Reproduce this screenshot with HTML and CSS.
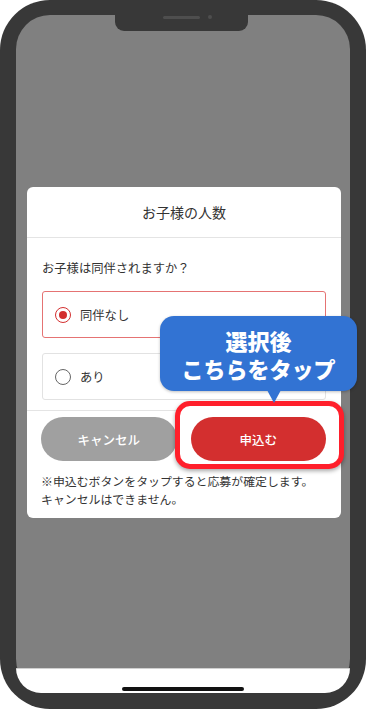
FILE: index.html
```html
<!DOCTYPE html>
<html lang="ja">
<head>
<meta charset="utf-8">
<link rel="stylesheet" href="styles.css">
</head>
<body>
<div class="phone">
  <div class="screen">
    <div class="notch"><span class="speaker"></span><span class="camera"></span></div>
    <div class="overlay">
      <div class="modal">
        <div class="modal-head">お子様の人数</div>
        <div class="modal-body">
          <p class="question">お子様は同伴されますか？</p>
          <div class="option selected"><span class="radio on"></span><span>同伴なし</span></div>
          <div class="option"><span class="radio"></span><span>あり</span></div>
        </div>
        <div class="modal-foot">
          <div class="buttons">
            <div class="btn cancel">キャンセル</div>
            <div class="btn apply"><span class="label">申込む</span></div>
          </div>
          <p class="note">※申込むボタンをタップすると応募が確定します。<br>キャンセルはできません。</p>
        </div>
      </div>
      <div class="bubble">選択後<br>こちらをタップ</div>
    </div>
    <div class="home"><span class="indicator"></span></div>
  </div>
</div>
</body>
</html>
```
FILE: styles.css
```css
* { box-sizing: border-box; }
html, body { margin: 0; padding: 0; background: #fff; }
body { font-family: "Noto Sans CJK JP", "Noto Sans", sans-serif; color: #333; }
.phone {
  width: 366px; height: 709px;
  background: #383838;
  border-radius: 50px;
  padding: 15px 16px 16px 16px;
}
.screen {
  position: relative;
  height: 100%;
  border-radius: 34px;
  display: flex; flex-direction: column;
  background: #808080;
}
.notch {
  position: absolute; left: 99px; top: 0;
  width: 133px; height: 16px;
  background: #383838;
  border-radius: 0 0 9px 9px;
}
.speaker {
  position: absolute; left: 48px; top: 1px;
  width: 37px; height: 3px; border-radius: 2px; background: #4e4e4e;
}
.camera {
  position: absolute; left: 93px; top: 0px;
  width: 4px; height: 4px; border-radius: 50%; background: #4e4e4e;
}
.overlay {
  position: relative;
  flex: 1;
  padding: 172px 0 0 11px;
  display: flex; flex-direction: column; align-items: flex-start;
}
.modal {
  width: 314px; background: #fff; border-radius: 6px;
}
.modal-head {
  height: 51px; display: flex; align-items: center; justify-content: center;
  font-size: 14px; border-bottom: 1px solid #e4e4e4; color: #333;
}
.modal-body { padding: 21px 15px 10px 15px; border-bottom: 1px solid #e4e4e4; }
.question { margin: 0 0 14px 0; font-size: 12.3px; line-height: 18px; }
.option {
  height: 47px; border: 1px solid #e2e2e2; border-radius: 3px;
  display: flex; align-items: center; padding-left: 12px; gap: 9px;
  font-size: 12.3px;
}
.option + .option { margin-top: 15px; }
.option.selected { border-color: #e57373; }
.radio {
  width: 16px; height: 16px; border-radius: 50%;
  border: 1.5px solid #666; display: flex; align-items: center; justify-content: center;
}
.radio.on { border-color: #d32f2f; }
.radio.on::after { content: ""; width: 8px; height: 8px; border-radius: 50%; background: #d32f2f; }
.modal-foot { padding: 6px 15px 10px 14px; }
.buttons { display: flex; gap: 14px; }
.btn {
  flex: 1; height: 44px; border-radius: 22px;
  display: flex; align-items: center; justify-content: center;
  color: #fff; font-size: 12.5px; font-weight: 500;
}
.cancel { background: #a0a0a0; }
.apply { position: relative; z-index: 1; }
.apply::before {
  content: ""; position: absolute; left: -16px; right: -18px; top: -16px; bottom: -8px;
  border: 5px solid #ff1f2b; border-radius: 15px; background: #fff;
  box-shadow: 0 2px 4px rgba(0,0,0,0.35);
  z-index: -2;
}
.apply::after {
  content: ""; position: absolute; inset: 0; border-radius: 22px; background: #d32f2f;
  z-index: -1;
}
.note { margin: 11px 0 0 0; font-size: 11.9px; line-height: 18px; color: #333; }
.bubble {
  position: absolute; left: 144px; top: 301px;
  width: 197px; height: 75px;
  background: #3273d3; border-radius: 14px;
  color: #fff; font-weight: 900; font-size: 22px; line-height: 28px;
  text-align: center; padding-top: 10px;
  box-shadow: 0 1px 3px rgba(0,0,0,0.25);
  z-index: 5;
}
.bubble::after {
  content: ""; position: absolute; left: 107px; top: 74px;
  border-left: 7px solid transparent; border-right: 7px solid transparent;
  border-top: 13px solid #3273d3;
}
.home {
  height: 25px; background: #fff; border-top: 1px solid #d0d0d0;
  border-radius: 0 0 34px 34px;
  display: flex; justify-content: center; align-items: flex-end; padding-bottom: 2px;
}
.indicator { width: 122px; height: 4px; border-radius: 2px; background: #111; }
```
